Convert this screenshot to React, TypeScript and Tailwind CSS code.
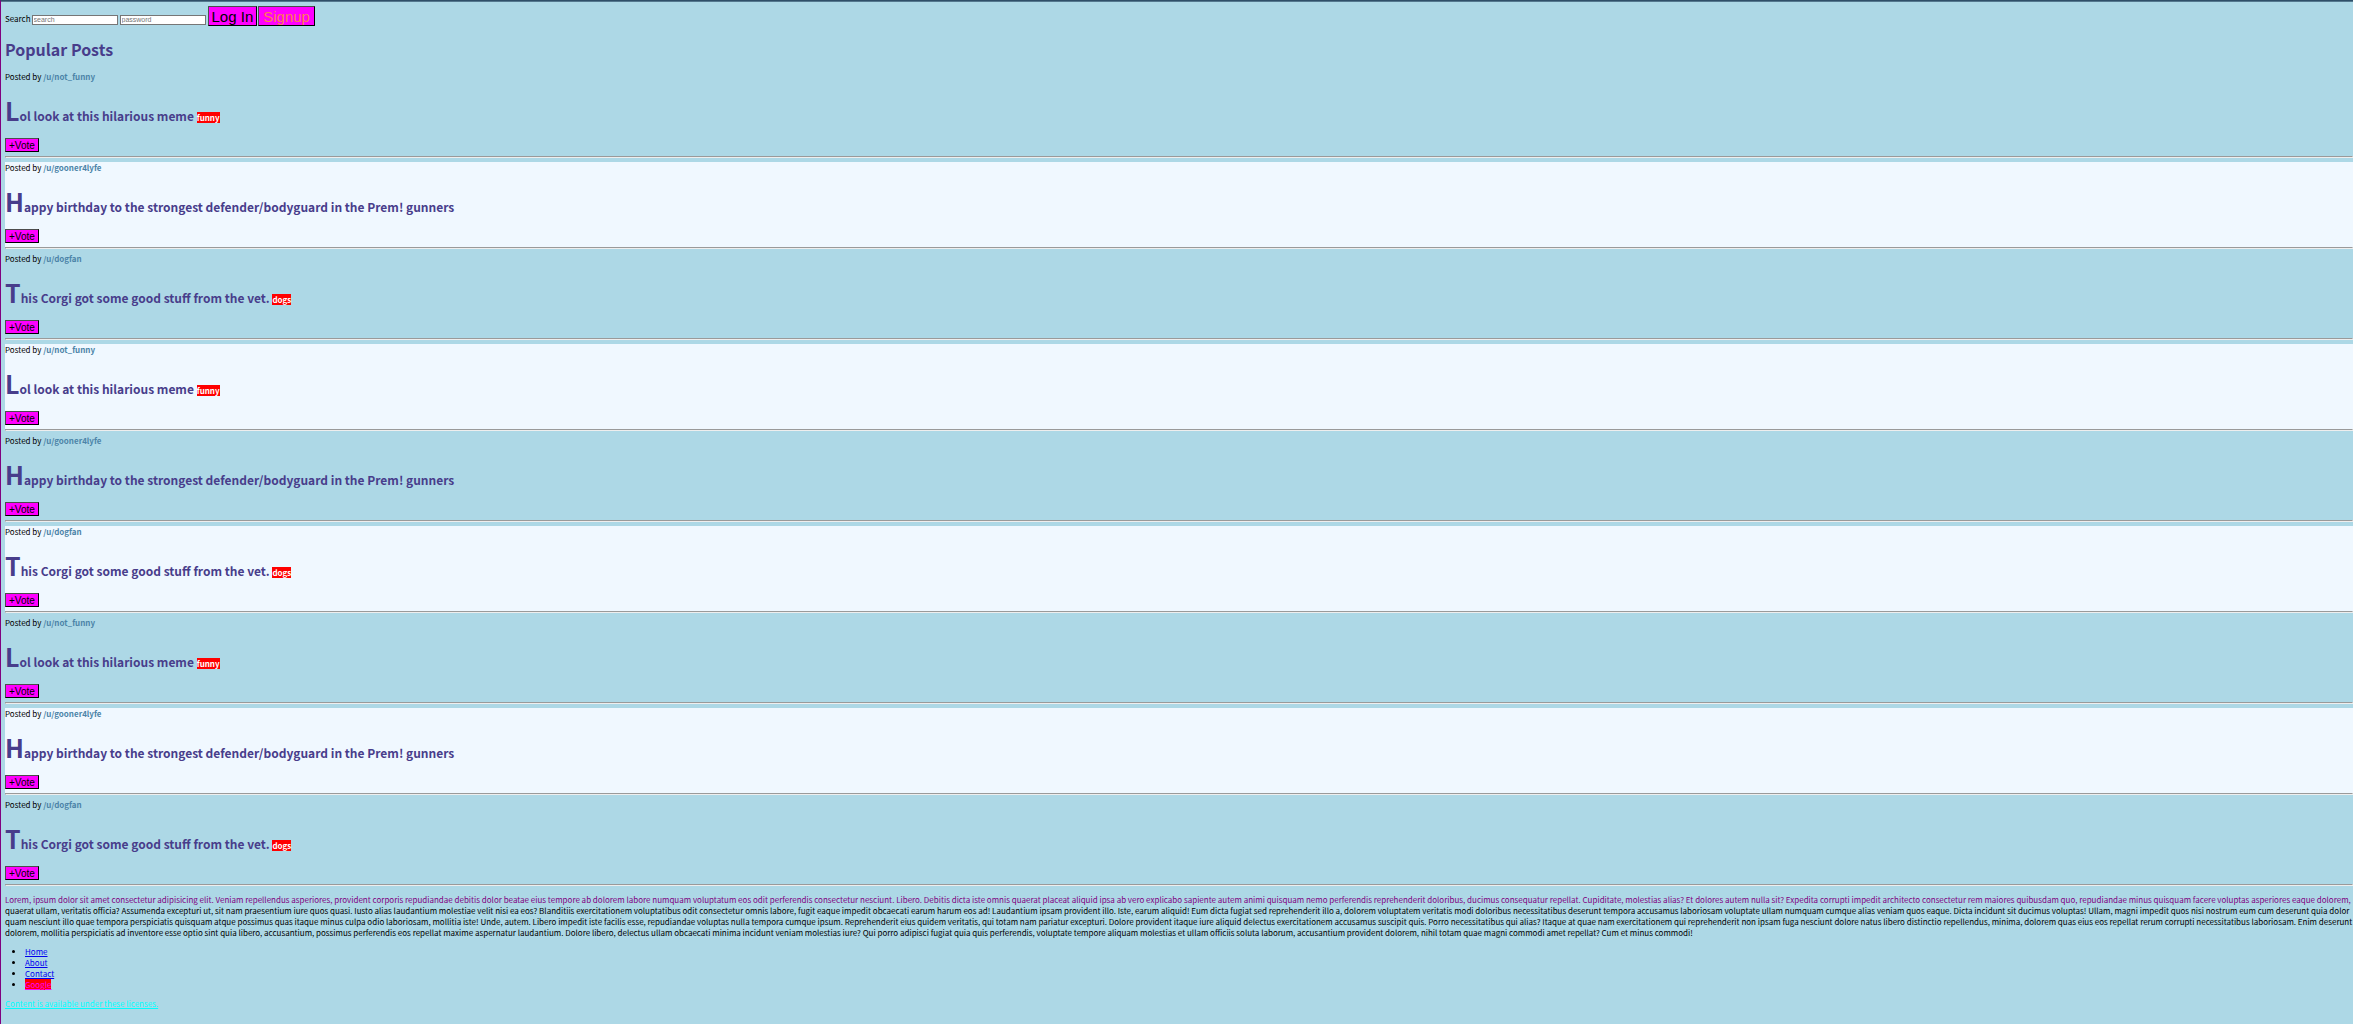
const POSTS = [
  { user: "/u/not_funny", title: "Lol look at this hilarious meme", tag: "funny" },
  {
    user: "/u/gooner4lyfe",
    title: "Happy birthday to the strongest defender/bodyguard in the Prem! gunners",
    tag: "",
  },
  { user: "/u/dogfan", title: "This Corgi got some good stuff from the vet.", tag: "dogs" },
];

const FEED = [...POSTS, ...POSTS, ...POSTS];

function Rule() {
  return (
    <hr className="mt-1 h-0 border border-t-[#9a9a9a] border-r-[#eeeeee] border-b-[#eeeeee] border-l-[#9a9a9a]" />
  );
}

function Post({ user, title, tag }: { user: string; title: string; tag: string }) {
  return (
    <article className="mb-1 even:bg-[#f0f8ff]">
      <p>
        Posted by <span className="font-bold text-[#4c84a8]">{user}</span>
      </p>
      <h2 className="my-[10px] text-[12px] leading-[normal] font-bold text-[#483d8b] first-letter:text-[25px]">
        {title}{" "}
        {tag && <span className="bg-[#ff0000] text-[8px] text-white">{tag}</span>}
      </h2>
      <button
        type="button"
        className="block h-[14px] border border-t-[#4c4c4c] border-r-black border-b-black border-l-[#4c4c4c] bg-[#ff00ff] px-[3px] pt-px font-['Liberation_Sans',sans-serif] text-[10px] leading-[11px] text-black"
      >
        +Vote
      </button>
      <Rule />
    </article>
  );
}

export default function App() {
  return (
    <div className="min-h-screen border-t border-l border-t-[#2f4f68] border-l-[#800080] bg-[#add8e6] pt-[5px] pl-1 font-['Noto_Sans_CJK_JP',sans-serif] text-[8px] leading-[11px] text-black shadow-[inset_0_1px_0_#54788e]">
      <form className="flex h-5 items-baseline" onSubmit={(e) => e.preventDefault()}>
        <label htmlFor="search">Search</label>
        <input
          id="search"
          type="text"
          placeholder="search"
          className="ml-px h-[10px] w-[86px] border border-[#767676] bg-white px-px font-['Liberation_Sans',sans-serif] text-[7px] leading-[8px] placeholder:text-[#757575]"
        />
        <input
          type="password"
          placeholder="password"
          aria-label="password"
          className="ml-[2px] h-[10px] w-[86px] border border-[#767676] bg-white px-px font-['Liberation_Sans',sans-serif] text-[7px] leading-[8px] placeholder:text-[#757575]"
        />
        <button
          type="button"
          className="ml-[2px] h-5 border border-t-[#4c4c4c] border-r-black border-b-black border-l-[#4c4c4c] bg-[#ff00ff] px-[3px] pt-px font-['Liberation_Sans',sans-serif] text-[15px] leading-[17px] text-black"
        >
          Log In
        </button>
        <button
          type="submit"
          className="ml-px h-5 border border-t-[#4c4c4c] border-r-black border-b-black border-l-[#4c4c4c] bg-[#ff00ff] px-1 pt-px font-['Liberation_Sans',sans-serif] text-[15px] leading-[17px] text-[#ff7f50]"
        >
          Signup
        </button>
      </form>

      <h1 className="mt-3 mb-[10px] text-[16px] leading-[23px] font-bold text-[#483d8b]">Popular Posts</h1>

      <main>
        {FEED.map((post, i) => (
          <Post key={i} {...post} />
        ))}
      </main>

      <p className="mt-2 first-line:text-[#800080]">
        Lorem, ipsum dolor sit amet consectetur adipisicing elit. Veniam repellendus asperiores, provident corporis
        repudiandae debitis dolor beatae eius tempore ab dolorem labore numquam voluptatum eos odit perferendis
        consectetur nesciunt. Libero. Debitis dicta iste omnis quaerat placeat aliquid ipsa ab vero explicabo sapiente
        autem animi quisquam nemo perferendis reprehenderit doloribus, ducimus consequatur repellat. Cupiditate,
        molestias alias? Et dolores autem nulla sit? Expedita corrupti impedit architecto consectetur rem maiores
        quibusdam quo, repudiandae minus quisquam facere voluptas asperiores eaque dolorem, quaerat ullam, veritatis
        officia? Assumenda excepturi ut, sit nam praesentium iure quos quasi. Iusto alias laudantium molestiae velit
        nisi ea eos? Blanditiis exercitationem voluptatibus odit consectetur omnis labore, fugit eaque impedit obcaecati
        earum harum eos ad! Laudantium ipsam provident illo. Iste, earum aliquid! Eum dicta fugiat sed reprehenderit
        illo a, dolorem voluptatem veritatis modi doloribus necessitatibus deserunt tempora accusamus laboriosam
        voluptate ullam numquam cumque alias veniam quos eaque. Dicta incidunt sit ducimus voluptas! Ullam, magni
        impedit quos nisi nostrum eum cum deserunt quia dolor quam nesciunt illo quae tempora perspiciatis quisquam
        atque possimus quas itaque minus culpa odio laboriosam, mollitia iste! Unde, autem. Libero impedit iste facilis
        esse, repudiandae voluptas nulla tempora cumque ipsum. Reprehenderit eius quidem veritatis, qui totam nam
        pariatur excepturi. Dolore provident itaque iure aliquid delectus exercitationem accusamus suscipit quis. Porro
        necessitatibus qui alias? Itaque at quae nam exercitationem qui reprehenderit non ipsam fuga nesciunt dolore
        natus libero distinctio repellendus, minima, dolorem quas eius eos repellat rerum corrupti necessitatibus
        laboriosam. Enim deserunt dolorem, mollitia perspiciatis ad inventore esse optio sint quia libero, accusantium,
        possimus perferendis eos repellat maxime aspernatur laudantium. Dolore libero, delectus ullam obcaecati minima
        incidunt veniam molestias iure? Qui porro adipisci fugiat quia quis perferendis, voluptate tempore aliquam
        molestias et ullam officiis soluta laborum, accusantium provident dolorem, nihil totam quae magni commodi amet
        repellat? Cum et minus commodi!
      </p>

      <ul className="my-2 list-disc pl-5 text-black">
        {["Home", "About", "Contact"].map((name) => (
          <li key={name}>
            <a href={"#" + name.toLowerCase()} className="text-[#0000ee] underline">
              {name}
            </a>
          </li>
        ))}
        <li>
          <a href="#google" className="bg-[#ff0000] text-[#ff00ff] underline">
            Google
          </a>
        </li>
      </ul>

      <a href="#licenses" className="text-[#00ffff] underline">
        Content is available under these licenses.
      </a>
    </div>
  );
}
